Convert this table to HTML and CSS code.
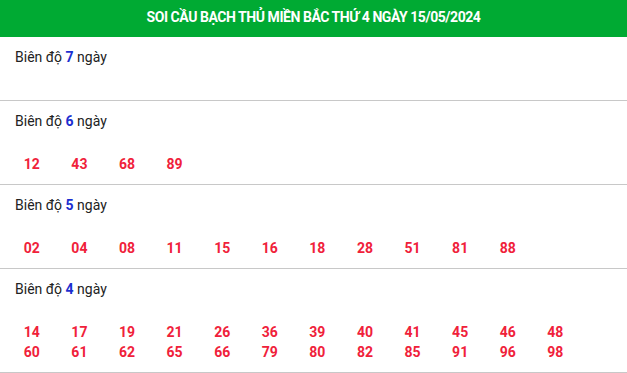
FILE: index.html
```html
<!DOCTYPE html>
<html lang="vi">
<head>
<meta charset="utf-8">
<title>Soi cầu bạch thủ miền Bắc</title>
<link rel="stylesheet" href="styles.css">
</head>
<body>
<div class="box">
  <h2 class="title">SOI CẦU BẠCH THỦ MIỀN BẮC THỨ 4 NGÀY 15/05/2024</h2>
  <div class="section">
    <div class="label">Biên độ <b>7</b> ngày</div>
    <div class="nums"></div>
  </div>
  <div class="section">
    <div class="label">Biên độ <b>6</b> ngày</div>
    <div class="nums">
      <span>12</span><span>43</span><span>68</span><span>89</span>
    </div>
  </div>
  <div class="section">
    <div class="label">Biên độ <b>5</b> ngày</div>
    <div class="nums">
      <span>02</span><span>04</span><span>08</span><span>11</span><span>15</span><span>16</span><span>18</span><span>28</span><span>51</span><span>81</span><span>88</span>
    </div>
  </div>
  <div class="section">
    <div class="label">Biên độ <b>4</b> ngày</div>
    <div class="nums">
      <span>14</span><span>17</span><span>19</span><span>21</span><span>26</span><span>36</span><span>39</span><span>40</span><span>41</span><span>45</span><span>46</span><span>48</span>
      <span>60</span><span>61</span><span>62</span><span>65</span><span>66</span><span>79</span><span>80</span><span>82</span><span>85</span><span>91</span><span>96</span><span>98</span>
    </div>
  </div>
</div>
</body>
</html>
```
FILE: styles.css
```css
html, body {
  margin: 0;
  padding: 0;
  background: #fff;
}
body {
  font-family: Roboto, "Noto Sans", Arial, sans-serif;
  color: #222;
}
.box {
  width: 627px;
}
.title {
  margin: 0;
  height: 37px;
  box-sizing: border-box;
  padding-bottom: 3px;
  line-height: 34px;
  background: #00aa33;
  color: #fff;
  font-size: 14px;
  font-weight: 700;
  text-align: center;
  letter-spacing: -0.45px;
}
.section {
  padding: 10px 0 10px 0;
  border-bottom: 1px solid #c8c8c8;
}
.label {
  padding-left: 15px;
  font-size: 14px;
  line-height: 20px;
}
.label b {
  color: #1c2fd0;
  font-weight: 700;
}
.nums {
  margin-top: 23px;
  padding-left: 8px;
  display: grid;
  grid-template-columns: repeat(12, 47.6px);
}
.nums span {
  text-align: center;
  font-size: 14px;
  font-weight: 700;
  line-height: 20px;
  color: #f0213a;
}
```
